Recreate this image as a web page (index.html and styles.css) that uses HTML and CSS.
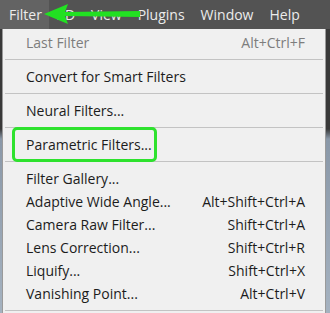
FILE: index.html
```html
<!DOCTYPE html>
<html lang="en">
<head>
    <meta charset="UTF-8">
    <title>Filter Menu</title>
    <link rel="stylesheet" href="styles.css">
</head>
<body>
    <div class="menubar">
        <span class="menubar-item active">Filter</span>
        <span class="menubar-item">3D</span>
        <span class="menubar-item">View</span>
        <span class="menubar-item">Plugins</span>
        <span class="menubar-item">Window</span>
        <span class="menubar-item">Help</span>
        <svg class="arrow" width="100" height="22" viewBox="0 0 100 22">
            <polygon points="0,11 24,1 21,9 96,8 96,14 21,13 24,21" fill="#22e022"/>
        </svg>
    </div>

    <div class="workspace">
        <div class="dropdown">
            <div class="item disabled"><span>Last Filter</span><span>Alt+Ctrl+F</span></div>
            <div class="sep"></div>
            <div class="item"><span>Convert for Smart Filters</span></div>
            <div class="sep"></div>
            <div class="item"><span>Neural Filters...</span></div>
            <div class="sep"></div>
            <div class="item"><span class="mark">Parametric Filters...</span></div>
            <div class="sep"></div>
            <div class="item"><span>Filter Gallery...</span></div>
            <div class="item"><span>Adaptive Wide Angle...</span><span>Alt+Shift+Ctrl+A</span></div>
            <div class="item"><span>Camera Raw Filter...</span><span>Shift+Ctrl+A</span></div>
            <div class="item"><span>Lens Correction...</span><span>Shift+Ctrl+R</span></div>
            <div class="item"><span>Liquify...</span><span>Shift+Ctrl+X</span></div>
            <div class="item"><span>Vanishing Point...</span><span>Alt+Ctrl+V</span></div>
            <div class="sep"></div>
        </div>
    </div>
</body>
</html>
```

FILE: styles.css
```css
body {
    margin: 0;
    width: 330px;
    height: 313px;
    overflow: hidden;
    font-family: "Open Sans", "Noto Sans", sans-serif;
    background-color: #3c3c3c;
}
.menubar {
    position: relative;
    display: flex;
    height: 29px;
    background-color: #535353;
    color: #ececec;
    font-size: 14px;
}
.menubar-item {
    display: flex;
    align-items: center;
    padding: 0 8px;
}
.menubar-item:first-child {
    padding-left: 9px;
}
.menubar-item.active {
    background-color: #636363;
    padding-right: 7px;
}
.arrow {
    position: absolute;
    left: 44px;
    top: 3px;
}
.workspace {
    display: flex;
    height: 284px;
    overflow: hidden;
    background: linear-gradient(#393939 0, #393939 100px, #8a98a8 110px, #a5b2c0 284px);
}
.dropdown {
    margin-left: 2px;
    width: 324px;
    height: 100%;
    overflow: hidden;
    background-color: #f0f0f0;
    border-left: 1px solid #9a9a9a;
    border-right: 1px solid #9a9a9a;
    padding-top: 2px;
    box-sizing: border-box;
}
.item {
    display: flex;
    justify-content: space-between;
    align-items: center;
    height: 23px;
    padding: 0 20px 0 23px;
    font-size: 14px;
    color: #1c1c1c;
}
.item.disabled {
    color: #7d7d7d;
}
.sep {
    height: 1px;
    margin: 5px 2px;
    background-color: #c3c3c3;
}
.mark {
    margin: -7px -5px -6px -14px;
    padding: 5px 2px 5px 11px;
    border: 3px solid #2ee22e;
    border-radius: 5px;
}
```
